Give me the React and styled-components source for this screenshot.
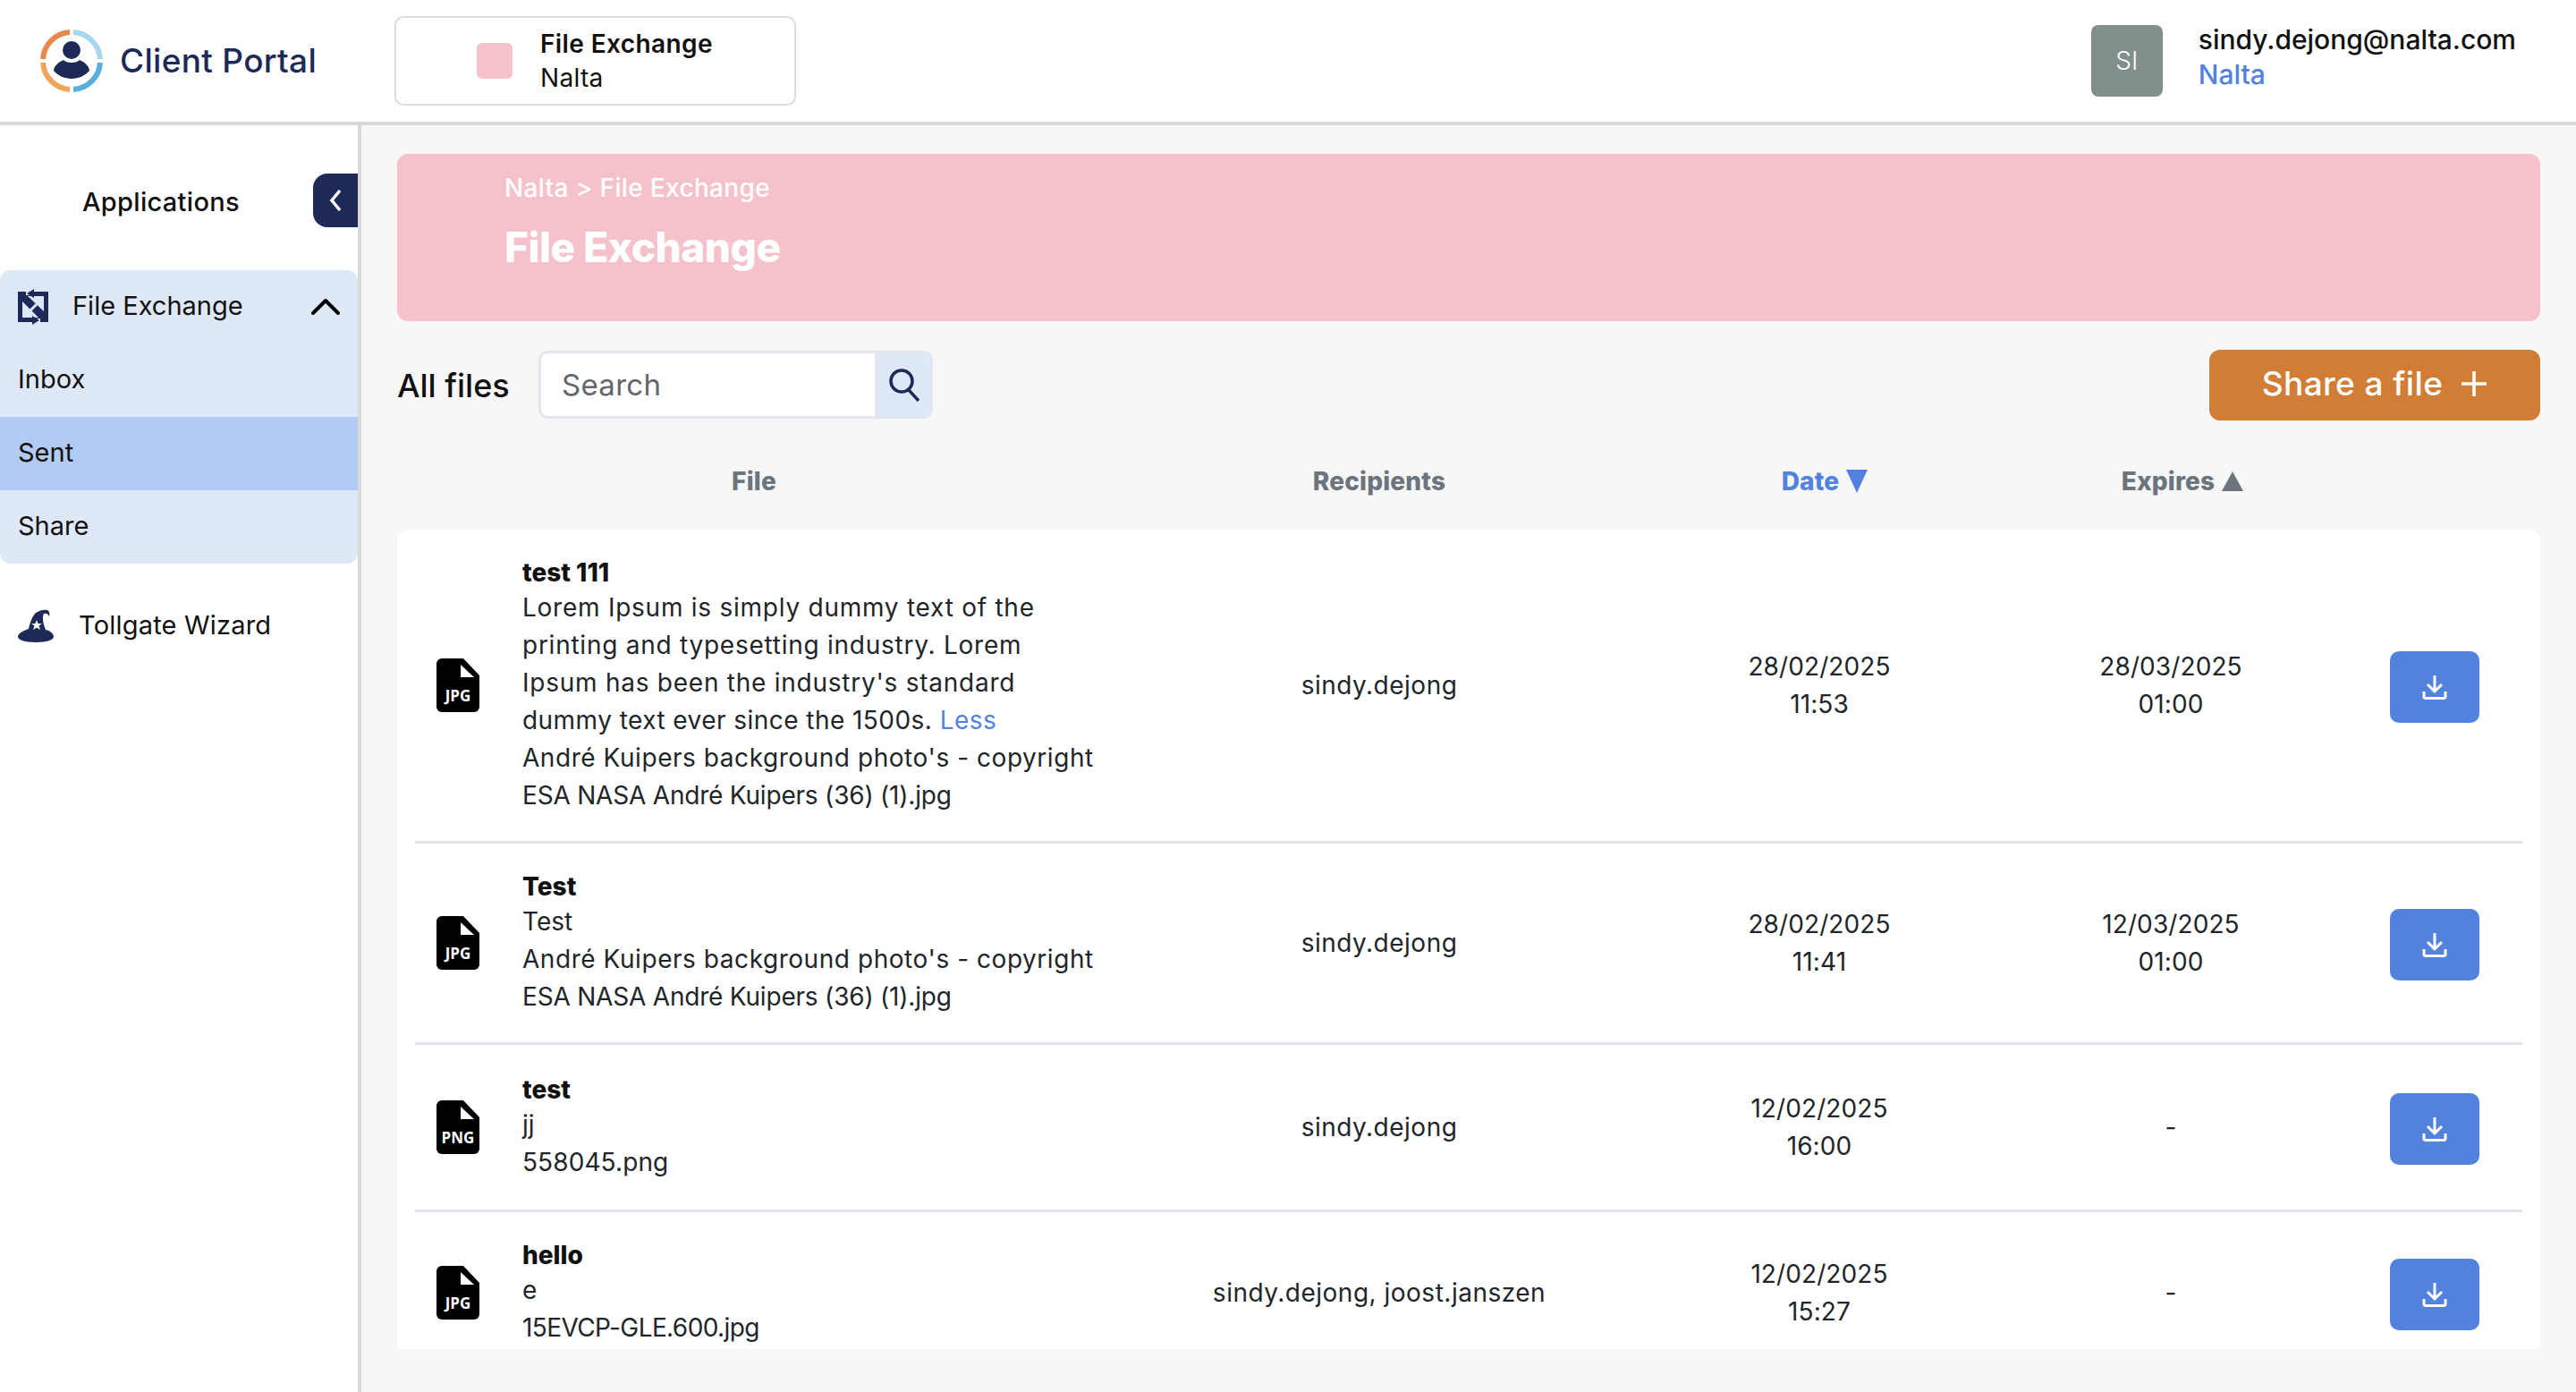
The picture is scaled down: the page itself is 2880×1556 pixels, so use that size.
import React from "react";
import styled, { createGlobalStyle } from "styled-components";

const Global = createGlobalStyle`
  html, body { margin: 0; padding: 0; height: 100%; background: #fff; }
  body { font-family: Inter, "Liberation Sans", sans-serif; color: #111; }
  * { box-sizing: border-box; }
`;

const Page = styled.div`
  width: 2880px; height: 1556px; display: flex; flex-direction: column; overflow: hidden;
`;
const Header = styled.header`
  height: 140px; flex: none; display: flex; align-items: center; background: #fff;
  border-bottom: 4px solid #d8d8d8; padding: 0 67px 0 44px;
`;
const Brand = styled.div`display: flex; align-items: center; gap: 18px; width: 397px;`;
const BrandName = styled.span`font-size: 37px; font-weight: 500; color: #1d2a57; letter-spacing: 0.3px; padding-bottom: 2px;`;
const AppCard = styled.div`
  width: 449px; height: 100px; border: 2px solid #dcdcdc; border-radius: 10px;
  display: flex; align-items: center; gap: 31px; padding-left: 90px; margin-top: -1px;
`;
const Swatch = styled.div`width: 40px; height: 40px; border-radius: 6px; background: #f5c2cc; margin-top: 1px;`;
const AppText = styled.div`display: flex; flex-direction: column; gap: 2px;`;
const AppTitle = styled.div`font-size: 28px; font-weight: 600; line-height: 36px; letter-spacing: 0.4px;`;
const AppSub = styled.div`font-size: 28px; line-height: 36px; letter-spacing: 0.3px;`;
const User = styled.div`margin-left: auto; display: flex; align-items: center; gap: 40px;`;
const Avatar = styled.div`
  width: 80px; height: 80px; border-radius: 8px; background: #828e8c; color: #fff;
  display: flex; align-items: center; justify-content: center; font-size: 28px; font-weight: 300;
`;
const UserText = styled.div`display: flex; flex-direction: column; gap: 3px; margin-top: -9px;`;
const Email = styled.div`font-size: 30px; font-weight: 500; line-height: 36px;`;
const Org = styled.div`font-size: 30px; font-weight: 500; line-height: 36px; color: #5282de;`;

const Body = styled.div`flex: 1; min-height: 0; display: flex;`;
const Sidebar = styled.aside`
  width: 404px; flex: none; background: #fff; border-right: 4px solid #d8d8d8; padding-top: 54px;
`;
const SideTop = styled.div`display: flex; align-items: center; height: 60px; padding-left: 92px; justify-content: space-between; margin-bottom: 48px;`;
const SideTitle = styled.div`font-size: 29px; font-weight: 500; letter-spacing: 0.3px; margin-top: 2px;`;
const Collapse = styled.button`
  width: 50px; height: 60px; border: 0; padding: 0; background: #1d2a57;
  border-radius: 16px 0 0 16px; display: flex; align-items: center; justify-content: center;
`;
const Group = styled.div`background: #dfe8f8; border-radius: 12px; overflow: hidden;`;
const GroupHead = styled.div`
  height: 82px; display: flex; align-items: center; padding: 0 20px; font-size: 29px;
`;
const GroupLabel = styled.span`margin-left: 27px; flex: 1; padding-bottom: 3px;`;
const SubItem = styled.div`
  height: 82px; display: flex; align-items: center; padding: 0 20px 3px; font-size: 29px;
  background: ${p => (p.$active ? "#b1cbf3" : "transparent")};
`;
const WizardRow = styled.div`
  display: flex; align-items: center; gap: 28px; padding: 0 20px; margin-top: 50px; font-size: 29px; height: 40px; letter-spacing: 0.2px;
`;
const WizardLabel = styled.span`padding-bottom: 3px;`;

const Main = styled.main`
  flex: 1; min-width: 0; background: #f7f7f7; padding: 32px 40px 48px; display: flex; flex-direction: column;
`;
const Banner = styled.section`
  height: 187px; flex: none; border-radius: 12px; background: #f5c2cc; color: #fff; padding: 20px 120px;
`;
const Crumb = styled.div`font-size: 28px; line-height: 36px; font-weight: 500; letter-spacing: 0.35px;`;
const BannerTitle = styled.h1`margin: 24px 0 0; font-size: 46px; line-height: 48px; font-weight: 800; letter-spacing: -0.5px;`;
const Toolbar = styled.div`height: 79px; margin-top: 32px; flex: none; display: flex; align-items: center;`;
const ToolTitle = styled.h2`margin: 0; font-size: 36px; font-weight: 500; width: 158px;`;
const SearchBox = styled.div`
  width: 441px; height: 76px; display: flex; border: 3px solid #e3e6ec; border-radius: 10px; overflow: hidden; background: #fff; margin-top: -2px;
`;
const SearchInput = styled.div`flex: 1; display: flex; align-items: center; padding-left: 23px; font-size: 33px; color: #62676d; letter-spacing: 0.3px;`;
const SearchBtn = styled.div`
  width: 62px; background: #dfe8f8; border-left: 3px solid #e3e6ec; display: flex; align-items: center; justify-content: center;
`;
const ShareBtn = styled.button`
  margin-left: auto; width: 370px; height: 79px; border: 0; border-radius: 12px; background: #d17d36; color: #fff;
  font: 500 37px Inter, sans-serif; letter-spacing: 0.4px; display: flex; align-items: center; justify-content: center; gap: 20px; padding: 0 0 4px;
`;

const COLS = "120px 664px 588px 396px 390px 198px";
const ColHead = styled.div`
  height: 122px; flex: none; display: grid; grid-template-columns: ${COLS}; padding: 14px 20px 0; align-items: center;
`;
const HeadCell = styled.div`
  grid-column: ${p => p.$span || "auto"};
  display: flex; align-items: center; justify-content: center; gap: 8px;
  font-size: 28px; font-weight: 800; letter-spacing: 0.2px; color: ${p => (p.$active ? "#5282de" : "#6c757d")};
  padding-left: ${p => p.$pl || 0}px; padding-right: ${p => p.$pr || 0}px;
`;
const Card = styled.section`
  flex: 1; min-height: 0; overflow: hidden; background: #fff; border-radius: 12px 12px 0 0; padding: 0 20px;
`;
const Row = styled.div`
  display: grid; grid-template-columns: ${COLS}; align-items: center; padding: 30px 0;
  min-height: ${p => (p.$last ? "0" : "187px")};
  border-bottom: ${p => (p.$last ? "0" : "3px solid #e2e4ea")};
`;
const IconCell = styled.div`padding-left: 24px; display: flex;`;
const FileCell = styled.div`font-size: 28px; line-height: 42px; color: #212529;`;
const FileName = styled.div`font-weight: 800; line-height: 36px; color: #111;`;
const Line = styled.div`white-space: nowrap; letter-spacing: ${p => p.$ls || 0}px;`;
const More = styled.a`color: #5282de;`;
const Cell = styled.div`font-size: 28px; line-height: 42px; text-align: center; color: #212529; letter-spacing: ${p => p.$ls ?? 0.1}px;`;
const ActionCell = styled.div`display: flex; justify-content: center; padding: 4px 0 0 2px;`;
const DownloadBtn = styled.button`
  width: 100px; height: 80px; border: 0; border-radius: 10px; background: #5282de; display: flex; align-items: center; justify-content: center; padding: 0;
`;

const Logo = () => (
  <svg width="72" height="72" viewBox="0 0 72 72" fill="none" strokeWidth="6">
    <path d="M34 4A32 32 0 0 0 4 34" stroke="#e8884f" />
    <path d="M38 4A32 32 0 0 1 68 34" stroke="#a5d8ef" />
    <path d="M4 38A32 32 0 0 0 34 68" stroke="#efa65c" />
    <path d="M68 38A32 32 0 0 1 38 68" stroke="#5aaedd" />
    <circle cx="36" cy="24" r="10" fill="#1d2a57" />
    <path d="M27 35C30 39 42 39 45 35C50 37 56 42 56 47C52 52 44 56 36 56C28 56 20 52 16 47C16 42 22 37 27 35Z" fill="#1d2a57" />
  </svg>
);
const ExchangeIcon = () => (
  <svg width="34" height="40" viewBox="0 0 34 40">
    <path fillRule="evenodd" d="M0 3H34V37H0ZM11 8H29V25ZM5 14V32H23Z" fill="#1d2a57" />
    <path d="M9 3H15V7H9ZM19 33H25V37H19Z" fill="#dfe8f8" />
    <path d="M14 24L21 17" stroke="#dfe8f8" strokeWidth="3" />
    <path d="M10 5L18 0V10Z" fill="#1d2a57" />
    <path d="M24 35L16 30V40Z" fill="#1d2a57" />
  </svg>
);
const WizardIcon = () => (
  <svg width="40" height="38" viewBox="0 0 40 38">
    <path d="M12 22C14 14 16 8 20 4C24 1 30 0 33 1C35 2 36 5 35 8C34 5 31 4 29 5C27 8 28 16 31 23C36 24 40 27 40 31C40 34 32 37 20 37C8 37 0 34 0 31C0 27 6 24 12 22Z" fill="#1d2a57" />
    <path d="M21 12L22.500 16L27 16L23.500 18.500L25 23L21 20.500L17 23L18.500 18.500L15 16L19.500 16Z" fill="#fff" />
  </svg>
);
const FileIcon = ({ ext }) => (
  <svg width="48" height="60" viewBox="0 0 48 60">
    <path d="M6 0H30L48 19V54A6 6 0 0 1 42 60H6A6 6 0 0 1 0 54V6A6 6 0 0 1 6 0Z" fill="#000" />
    <path d="M27 7L42 21H27Z" fill="#fff" />
    <text x="24" y="48" textAnchor="middle" fontFamily="'Open Sans', sans-serif" fontWeight="700" fontSize="17" fill="#fff">{ext}</text>
  </svg>
);
const Down = () => (
  <svg width="28" height="28" viewBox="0 0 28 28" fill="none" stroke="#fff" strokeWidth="3">
    <path d="M14 1V18M6 11L14 19L22 11" />
    <path d="M2 19V25A1.5 1.5 0 0 0 3.5 26.5H24.500A1.5 1.5 0 0 0 26 25V19" />
  </svg>
);
const Tri = ({ up, color }) => (
  <svg width="24" height={up ? 22 : 26} viewBox="0 0 24 22" preserveAspectRatio="none">
    <path d={up ? "M12 0L24 22H0Z" : "M0 0H24L12 22Z"} fill={color} />
  </svg>
);

const rows = [
  {
    ext: "JPG", name: "test 111",
    lines: [
      ["Lorem Ipsum is simply dummy text of the", 0.75],
      ["printing and typesetting industry. Lorem", 0.75],
      ["Ipsum has been the industry's standard", 0.75],
      [<>dummy text ever since the 1500s. <More>Less</More></>, 0.45],
      ["André Kuipers background photo's - copyright", 0.55],
      ["ESA NASA André Kuipers (36) (1).jpg", -0.2],
    ],
    to: "sindy.dejong", date: ["28/02/2025", "11:53"], exp: ["28/03/2025", "01:00"],
  },
  {
    ext: "JPG", name: "Test",
    lines: [["Test", 0], ["André Kuipers background photo's - copyright", 0.55], ["ESA NASA André Kuipers (36) (1).jpg", -0.2]],
    to: "sindy.dejong", date: ["28/02/2025", "11:41"], exp: ["12/03/2025", "01:00"],
  },
  {
    ext: "PNG", name: "test", lines: [["jj", 0], ["558045.png", 0.1]],
    to: "sindy.dejong", date: ["12/02/2025", "16:00"], exp: ["-"],
  },
  {
    ext: "JPG", name: "hello", lines: [["e", 0], ["15EVCP-GLE.600.jpg", -0.6]],
    to: "sindy.dejong, joost.janszen", date: ["12/02/2025", "15:27"], exp: ["-"],
  },
];

export default function App() {
  return (
    <Page>
      <Global />
      <Header>
        <Brand><Logo /><BrandName>Client Portal</BrandName></Brand>
        <AppCard>
          <Swatch />
          <AppText><AppTitle>File Exchange</AppTitle><AppSub>Nalta</AppSub></AppText>
        </AppCard>
        <User>
          <Avatar>SI</Avatar>
          <UserText><Email>sindy.dejong@nalta.com</Email><Org>Nalta</Org></UserText>
        </User>
      </Header>
      <Body>
        <Sidebar>
          <SideTop>
            <SideTitle>Applications</SideTitle>
            <Collapse>
              <svg width="16" height="26" viewBox="0 0 16 26" fill="none" stroke="#fff" strokeWidth="3.500"><path d="M13 2L4 13L13 24" /></svg>
            </Collapse>
          </SideTop>
          <Group>
            <GroupHead>
              <ExchangeIcon />
              <GroupLabel>File Exchange</GroupLabel>
              <svg width="32" height="20" viewBox="0 0 32 20" fill="none" stroke="#000" strokeWidth="4" strokeLinecap="round" strokeLinejoin="round"><path d="M2 17L16 3L30 17" /></svg>
            </GroupHead>
            <SubItem>Inbox</SubItem>
            <SubItem $active>Sent</SubItem>
            <SubItem>Share</SubItem>
          </Group>
          <WizardRow><WizardIcon /><WizardLabel>Tollgate Wizard</WizardLabel></WizardRow>
        </Sidebar>
        <Main>
          <Banner>
            <Crumb>Nalta &gt; File Exchange</Crumb>
            <BannerTitle>File Exchange</BannerTitle>
          </Banner>
          <Toolbar>
            <ToolTitle>All files</ToolTitle>
            <SearchBox>
              <SearchInput>Search</SearchInput>
              <SearchBtn>
                <svg width="36" height="38" viewBox="0 0 36 38" fill="none" stroke="#1d2a57" strokeWidth="3.500"><circle cx="15" cy="15" r="12" /><path d="M23 25L34 37" /></svg>
              </SearchBtn>
            </SearchBox>
            <ShareBtn>
              Share a file
              <svg width="30" height="30" viewBox="0 0 30 30" stroke="#fff" strokeWidth="3.500"><path d="M15 1V29M1 15H29" /></svg>
            </ShareBtn>
          </Toolbar>
          <ColHead>
            <HeadCell $span="span 2" $pr={26}>File</HeadCell>
            <HeadCell>Recipients</HeadCell>
            <HeadCell $active $pl={12}>Date <Tri color="#5282de" /></HeadCell>
            <HeadCell $pl={26}>Expires <Tri up color="#6c757d" /></HeadCell>
            <div />
          </ColHead>
          <Card>
            {rows.map((r, i) => (
              <Row key={i} $last={i === rows.length - 1}>
                <IconCell><FileIcon ext={r.ext} /></IconCell>
                <FileCell>
                  <FileName>{r.name}</FileName>
                  {r.lines.map(([l, ls], j) => <Line key={j} $ls={ls}>{l}</Line>)}
                </FileCell>
                <Cell $ls={0.5}>{r.to}</Cell>
                <Cell>{r.date.map(d => <div key={d}>{d}</div>)}</Cell>
                <Cell>{r.exp.map(d => <div key={d}>{d}</div>)}</Cell>
                <ActionCell><DownloadBtn aria-label="Download"><Down /></DownloadBtn></ActionCell>
              </Row>
            ))}
          </Card>
        </Main>
      </Body>
    </Page>
  );
}
